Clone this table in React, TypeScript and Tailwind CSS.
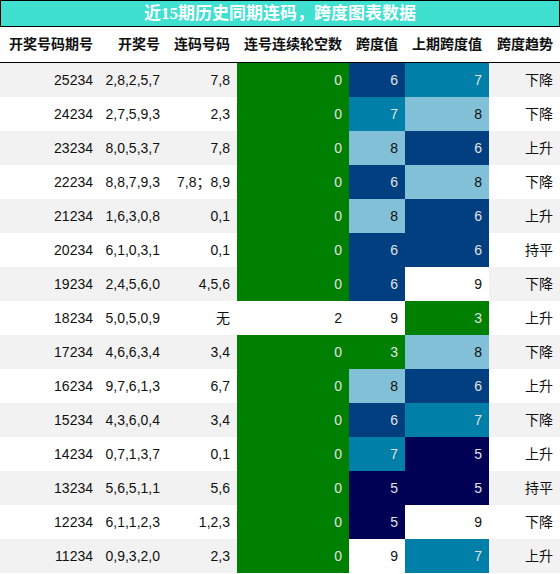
import React from "react";

type Row = [string, string, string, string, string, string, string];

const rows: Row[] = [
  ["25234", "2,8,2,5,7", "7,8", "0", "6", "7", "下降"],
  ["24234", "2,7,5,9,3", "2,3", "0", "7", "8", "下降"],
  ["23234", "8,0,5,3,7", "7,8", "0", "8", "6", "上升"],
  ["22234", "8,8,7,9,3", "7,8；8,9", "0", "6", "8", "下降"],
  ["21234", "1,6,3,0,8", "0,1", "0", "8", "6", "上升"],
  ["20234", "6,1,0,3,1", "0,1", "0", "6", "6", "持平"],
  ["19234", "2,4,5,6,0", "4,5,6", "0", "6", "9", "下降"],
  ["18234", "5,0,5,0,9", "无", "2", "9", "3", "上升"],
  ["17234", "4,6,6,3,4", "3,4", "0", "3", "8", "下降"],
  ["16234", "9,7,6,1,3", "6,7", "0", "8", "6", "上升"],
  ["15234", "4,3,6,0,4", "3,4", "0", "6", "7", "下降"],
  ["14234", "0,7,1,3,7", "0,1", "0", "7", "5", "上升"],
  ["13234", "5,6,5,1,1", "5,6", "0", "5", "5", "持平"],
  ["12234", "6,1,1,2,3", "1,2,3", "0", "5", "9", "下降"],
  ["11234", "0,9,3,2,0", "2,3", "0", "9", "7", "上升"],
];

const headers = ["开奖号码期号", "开奖号", "连码号码", "连号连续轮空数", "跨度值", "上期跨度值", "跨度趋势"];

// colour of a span cell by its value
const spanCls = (v: string) => {
  switch (v) {
    case "3":
      return "bg-[#008000] text-[#e2e2e2]";
    case "5":
      return "bg-[#000054] text-[#e2e2e2]";
    case "6":
      return "bg-[#013f80] text-[#e2e2e2]";
    case "7":
      return "bg-[#007fa8] text-[#e2e2e2]";
    case "8":
      return "bg-[#81c0d6] text-[#111]";
    default:
      return "bg-white text-[#111]";
  }
};

const cell = "flex items-center justify-end pr-[7px] h-[34px]";

export default function App() {
  return (
    <div
      className="w-[560px] h-[574px] overflow-hidden bg-white text-[14px] text-[#111]"
      style={{ fontFamily: '"Liberation Sans", "Noto Sans CJK SC", sans-serif' }}
    >
      <div
        className="h-[27px] border border-black bg-[#40e0d0] text-white font-bold text-[17px] flex items-center justify-center"
        style={{ fontFamily: '"Liberation Serif", "Noto Sans CJK SC", serif' }}
      >
        近15期历史同期连码，跨度图表数据
      </div>
      <div className="grid grid-cols-[100px_67px_70px_112px_56px_84px_71px] h-[36px] border-b border-black font-bold">
        {headers.map((h) => (
          <div key={h} className="flex items-center justify-end pr-[7px]">
            {h}
          </div>
        ))}
      </div>
      {rows.map((r, i) => {
        const bg = i % 2 === 0 ? "bg-[#f2f2f2]" : "bg-white";
        const kong = r[3] === "0" ? "bg-[#008000] text-[#e2e2e2]" : "bg-white";
        return (
          <div key={r[0]} className={`grid grid-cols-[100px_67px_70px_112px_56px_84px_71px] ${bg}`}>
            <div className={cell}>{r[0]}</div>
            <div className={cell}>{r[1]}</div>
            <div className={cell}>{r[2]}</div>
            <div className={`${cell} ${kong}`}>{r[3]}</div>
            <div className={`${cell} ${spanCls(r[4])}`}>{r[4]}</div>
            <div className={`${cell} ${spanCls(r[5])}`}>{r[5]}</div>
            <div className={cell}>{r[6]}</div>
          </div>
        );
      })}
    </div>
  );
}
